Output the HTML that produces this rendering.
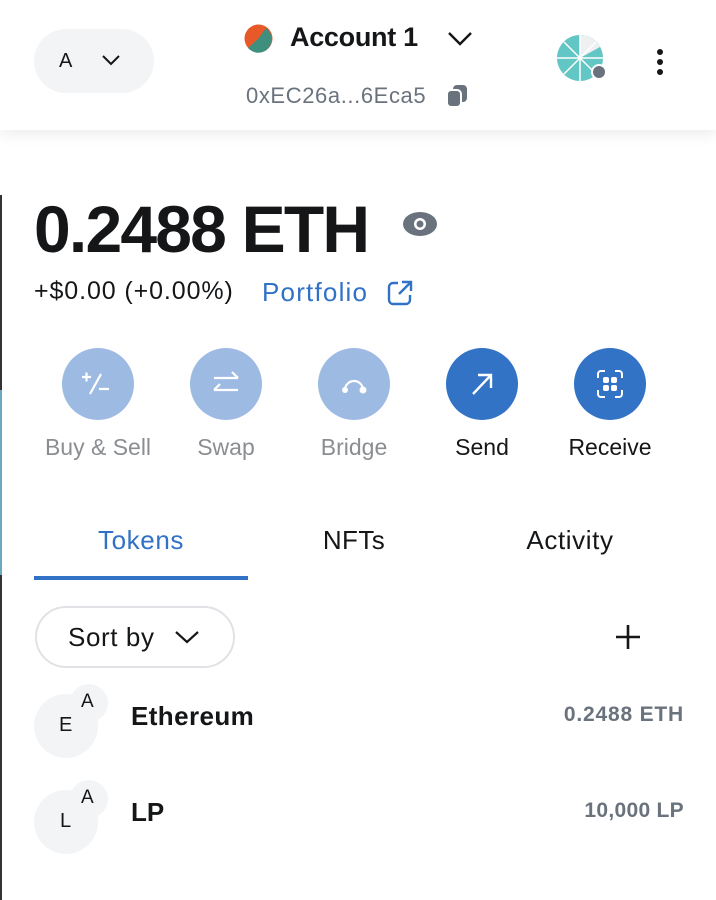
<!DOCTYPE html>
<html><head><meta charset="utf-8"><style>
*{margin:0;padding:0;box-sizing:border-box}
body{width:716px;height:900px;background:#fff;font-family:"Liberation Sans",sans-serif;position:relative;overflow:hidden;color:#141618}
.a{position:absolute}
.hdr{left:0;top:0;width:716px;height:130px;background:#fff;box-shadow:0 4px 14px rgba(0,0,0,.08)}
.circ{border-radius:50%}
.btn{width:72px;height:72px;border-radius:50%;top:348px}
.lbl{top:434px;width:128px;text-align:center;font-size:23px}
</style></head><body>
<div class="a" style="left:0;top:195px;width:2px;height:705px;background:#333"></div>
<div class="a" style="left:0;top:390px;width:2px;height:185px;background:#6aa9c0"></div>
<div class="a hdr"></div>
<div class="a" style="left:34px;top:29px;width:120px;height:64px;border-radius:32px;background:#f2f4f6"></div>
<div class="a" style="left:59px;top:50px;font-size:20px">A</div>
<svg class="a" style="left:101px;top:53px" width="20" height="14"><path d="M2 3l8 8 8-8" fill="none" stroke="#141618" stroke-width="2"/></svg>
<svg class="a" style="left:244px;top:24px" width="29" height="29" viewBox="0 0 29 29"><circle cx="14.5" cy="14.5" r="14" fill="#e8592a"/><path d="M14.5 14.5L22 4A14 14 0 0 1 22 26.5 14 14 0 0 1 4 24z" fill="#3f8f7e"/></svg>
<div class="a" style="left:290px;top:22px;font-size:27px;font-weight:bold;letter-spacing:-0.3px">Account 1</div>
<svg class="a" style="left:447px;top:30px" width="26" height="18"><path d="M2 3l11 11 11-11" fill="none" stroke="#141618" stroke-width="2.4"/></svg>
<div class="a" style="left:246px;top:83px;font-size:22px;color:#6a737d;letter-spacing:0.6px">0xEC26a...6Eca5</div>
<svg class="a" style="left:444px;top:83px" width="26" height="26"><rect x="9" y="2" width="14" height="17" rx="4" fill="#6a737d"/><rect x="3" y="7" width="14" height="17" rx="4" fill="#6a737d" stroke="#fff" stroke-width="2"/></svg>
<svg class="a" style="left:556px;top:34px" width="54" height="50" viewBox="0 0 54 50"><circle cx="24" cy="24" r="23" fill="#62c6c5"/><path d="M24 24L24 1A23 23 0 0 1 44 13z" fill="#eef0f2"/><g stroke="#fff" stroke-width="1.5"><path d="M24 1V47M1 24H47M8 8L40 40M40 8L8 40"/></g><circle cx="43" cy="38" r="8" fill="#fff"/><circle cx="43" cy="38" r="6" fill="#6a737d"/></svg>
<div class="a circ" style="left:657px;top:49px;width:6px;height:6px;background:#141618"></div>
<div class="a circ" style="left:657px;top:59px;width:6px;height:6px;background:#141618"></div>
<div class="a circ" style="left:657px;top:69px;width:6px;height:6px;background:#141618"></div>

<div class="a" style="left:34px;top:191px;font-size:66px;font-weight:bold;letter-spacing:-1.8px">0.2488 ETH</div>
<svg class="a" style="left:402px;top:210px" width="36" height="28"><ellipse cx="18" cy="14" rx="17" ry="12" fill="#6a737d"/><circle cx="18" cy="14" r="6" fill="#fff"/><circle cx="18" cy="14" r="3.5" fill="#6a737d"/></svg>
<div class="a" style="left:34px;top:277px;font-size:25px;letter-spacing:0.9px">+$0.00 (+0.00%)</div>
<div class="a" style="left:262px;top:277px;font-size:26px;color:#3172c6;letter-spacing:1.2px">Portfolio</div>
<svg class="a" style="left:386px;top:279px" width="28" height="28"><path d="M12 4H7a4 4 0 0 0-4 4v13a4 4 0 0 0 4 4h13a4 4 0 0 0 4-4v-5M16 3h9v9M25 3L13 15" fill="none" stroke="#3172c6" stroke-width="2.4"/></svg>

<div class="a btn" style="left:62px;background:#9dbae3"></div>
<div class="a btn" style="left:190px;background:#9dbae3"></div>
<div class="a btn" style="left:318px;background:#9dbae3"></div>
<div class="a btn" style="left:446px;background:#3273c6"></div>
<div class="a btn" style="left:574px;background:#3273c6"></div>
<svg class="a" style="left:62px;top:348px" width="72" height="72"><g stroke="#fff" stroke-width="2.2" fill="none"><path d="M20 29h9M24.5 24.5v9M39 26L28 46M37 41h10"/></g></svg>
<svg class="a" style="left:190px;top:348px" width="72" height="72"><g stroke="#fff" stroke-width="2.2" fill="none"><path d="M24 30h24M42 24l6 6M48 42H24M30 36l-6 6"/></g></svg>
<svg class="a" style="left:318px;top:348px" width="72" height="72"><path d="M27 42a9 9 0 0 1 18 0" stroke="#fff" stroke-width="2.2" fill="none"/><circle cx="27" cy="42" r="3" fill="#fff"/><circle cx="45" cy="42" r="3.5" fill="#fff"/></svg>
<svg class="a" style="left:446px;top:348px" width="72" height="72"><path d="M27 46L45 27M32 27h13v13" stroke="#fff" stroke-width="2.4" fill="none"/></svg>
<svg class="a" style="left:574px;top:348px" width="72" height="72"><g stroke="#fff" stroke-width="2" fill="none"><path d="M24 30v-4a3 3 0 0 1 3-3h4M41 23h4a3 3 0 0 1 3 3v4M48 42v4a3 3 0 0 1-3 3h-4M31 49h-4a3 3 0 0 1-3-3v-4"/></g><g fill="#fff"><rect x="29" y="29" width="6" height="6" rx="2"/><rect x="37" y="29" width="6" height="6" rx="2"/><rect x="29" y="37" width="6" height="6" rx="2"/><rect x="37" y="37" width="6" height="6" rx="2"/></g></svg>
<div class="a lbl" style="left:34px;color:#8a8d91">Buy &amp; Sell</div>
<div class="a lbl" style="left:162px;color:#8a8d91">Swap</div>
<div class="a lbl" style="left:290px;color:#8a8d91">Bridge</div>
<div class="a lbl" style="left:418px">Send</div>
<div class="a lbl" style="left:546px">Receive</div>

<div class="a" style="left:34px;top:525px;width:214px;text-align:center;font-size:26px;color:#3172c6;letter-spacing:0.6px">Tokens</div>
<div class="a" style="left:248px;top:525px;width:212px;text-align:center;font-size:26px;letter-spacing:0.4px">NFTs</div>
<div class="a" style="left:462px;top:525px;width:216px;text-align:center;font-size:26px;letter-spacing:0.6px">Activity</div>
<div class="a" style="left:34px;top:576px;width:214px;height:4px;background:#3172c6"></div>

<div class="a" style="left:35px;top:606px;width:200px;height:62px;border:2px solid #e0e2e5;border-radius:31px"></div>
<div class="a" style="left:68px;top:622px;font-size:26px;letter-spacing:0.6px">Sort by</div>
<svg class="a" style="left:174px;top:629px" width="26" height="16"><path d="M2 3l11 10 11-10" fill="none" stroke="#141618" stroke-width="2.2"/></svg>
<svg class="a" style="left:614px;top:623px" width="28" height="28"><path d="M14 2v24M2 14h24" stroke="#141618" stroke-width="2.6"/></svg>

<div class="a circ" style="left:34px;top:694px;width:64px;height:64px;background:#f2f4f6"></div>
<div class="a circ" style="left:70px;top:684px;width:38px;height:38px;background:#f2f4f6"></div>
<div class="a" style="left:59px;top:714px;font-size:20px">E</div>
<div class="a" style="left:81px;top:691px;font-size:19px">A</div>
<div class="a" style="left:131px;top:701px;font-size:26px;font-weight:bold;letter-spacing:0.4px">Ethereum</div>
<div class="a" style="right:32px;top:703px;font-size:21px;color:#6a737d;font-weight:bold;letter-spacing:0.8px">0.2488 ETH</div>

<div class="a circ" style="left:34px;top:790px;width:64px;height:64px;background:#f2f4f6"></div>
<div class="a circ" style="left:70px;top:780px;width:38px;height:38px;background:#f2f4f6"></div>
<div class="a" style="left:60px;top:810px;font-size:20px">L</div>
<div class="a" style="left:81px;top:787px;font-size:19px">A</div>
<div class="a" style="left:131px;top:797px;font-size:26px;font-weight:bold">LP</div>
<div class="a" style="right:32px;top:799px;font-size:21px;color:#6a737d;font-weight:bold;letter-spacing:0.3px">10,000 LP</div>
</body></html>
